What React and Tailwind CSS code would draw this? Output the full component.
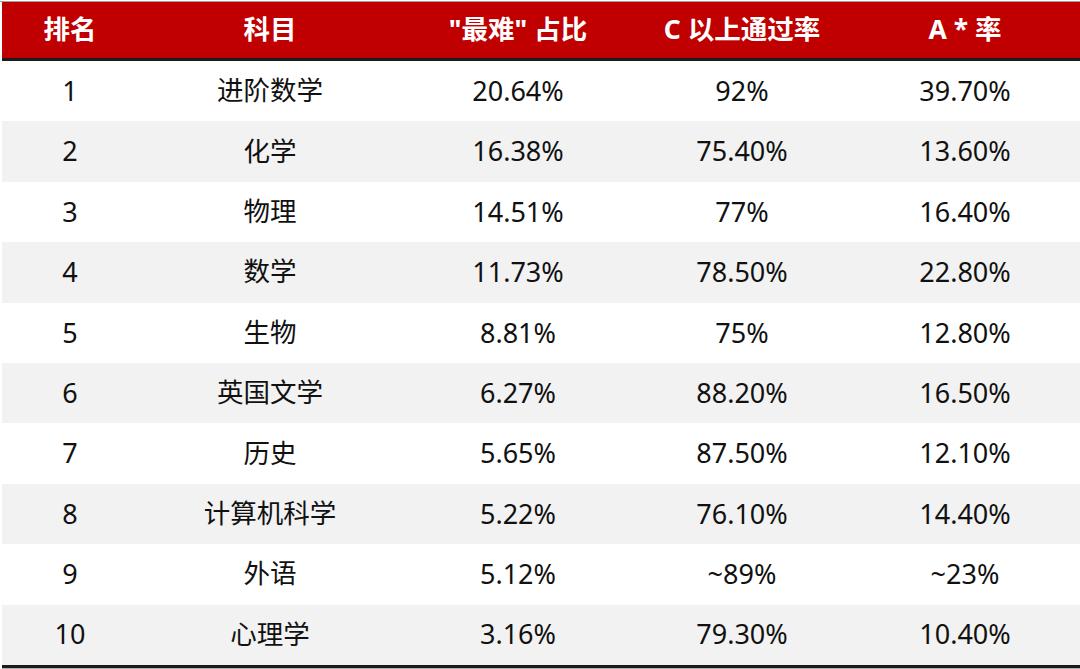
const rows = [
  ["1", "进阶数学", "20.64%", "92%", "39.70%"],
  ["2", "化学", "16.38%", "75.40%", "13.60%"],
  ["3", "物理", "14.51%", "77%", "16.40%"],
  ["4", "数学", "11.73%", "78.50%", "22.80%"],
  ["5", "生物", "8.81%", "75%", "12.80%"],
  ["6", "英国文学", "6.27%", "88.20%", "16.50%"],
  ["7", "历史", "5.65%", "87.50%", "12.10%"],
  ["8", "计算机科学", "5.22%", "76.10%", "14.40%"],
  ["9", "外语", "5.12%", "~89%", "~23%"],
  ["10", "心理学", "3.16%", "79.30%", "10.40%"],
];

const cols = "grid grid-cols-[136px_264px_232px_216px_1fr]";

export default function App() {
  return (
    <div
      className="w-[1080px] h-[669px] bg-white pt-[1px] overflow-hidden"
      style={{ fontFamily: '"Noto Sans", "Noto Sans CJK SC", sans-serif' }}
    >
      <div className="border-t border-[#a0a0a0] pl-[2px]">
        <div className={`${cols} h-[59px] bg-[#c00000] text-white font-bold text-[26.5px] items-center border-b-[3px] border-[#1b1b1b]`}>
          <div className="text-center">排名</div>
          <div className="text-center">科目</div>
          <div className="text-center">"最难" 占比</div>
          <div className="text-center">C 以上通过率</div>
          <div className="text-center">A * 率</div>
        </div>
        {rows.map((r, i) => (
          <div
            key={i}
            className={`${cols} h-[60.4px] items-center text-[#111] ${i % 2 === 1 ? "bg-[#f2f2f2]" : "bg-white"}`}
          >
            {r.map((c, j) => (
              <div key={j} className={`text-center ${j === 1 ? "text-[26.5px]" : "text-[27px]"}`}>{c}</div>
            ))}
          </div>
        ))}
        <div className="h-[3px] bg-[#1b1b1b]" />
        <div className="h-[2px] bg-[#b0b0b0]" />
      </div>
    </div>
  );
}
